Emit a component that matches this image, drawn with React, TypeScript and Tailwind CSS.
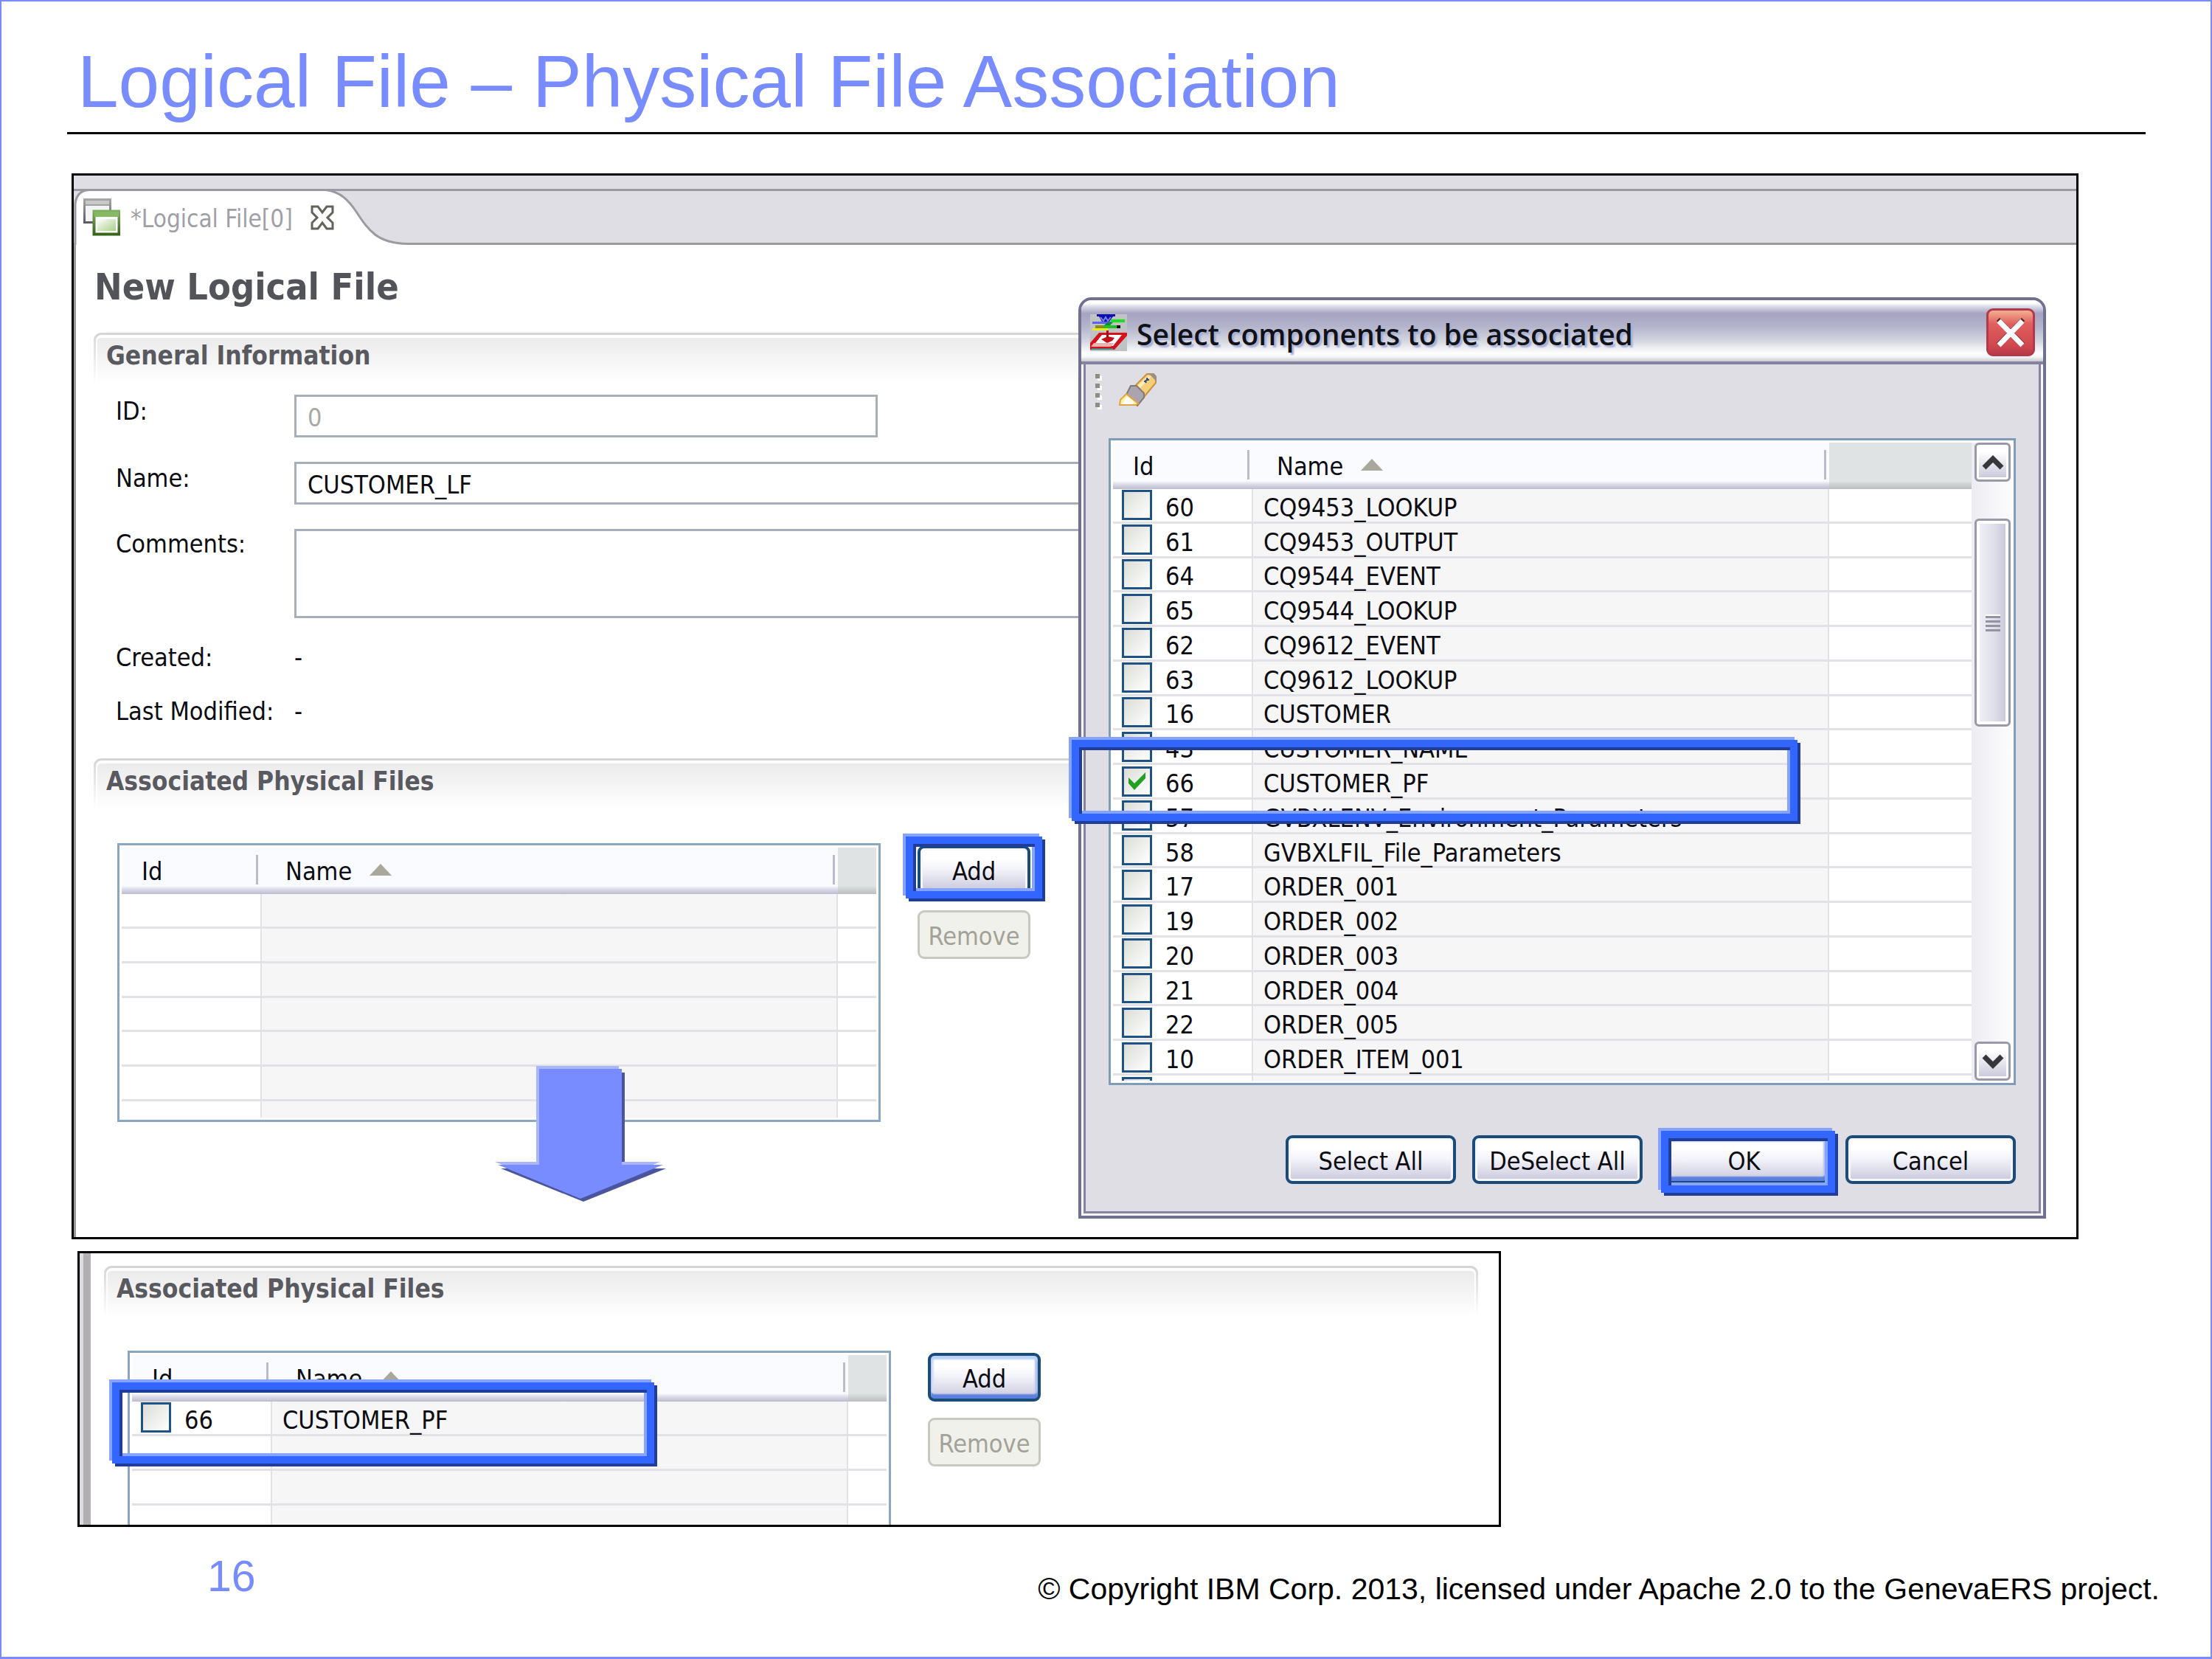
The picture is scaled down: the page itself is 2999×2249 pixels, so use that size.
import type { ReactNode } from "react";

type Row = { id: string; name: string; checked?: boolean };

const components: Row[] = [
  { id: "60", name: "CQ9453_LOOKUP" },
  { id: "61", name: "CQ9453_OUTPUT" },
  { id: "64", name: "CQ9544_EVENT" },
  { id: "65", name: "CQ9544_LOOKUP" },
  { id: "62", name: "CQ9612_EVENT" },
  { id: "63", name: "CQ9612_LOOKUP" },
  { id: "16", name: "CUSTOMER" },
  { id: "43", name: "CUSTOMER_NAME" },
  { id: "66", name: "CUSTOMER_PF", checked: true },
  { id: "57", name: "GVBXLENV_Environment_Parameters" },
  { id: "58", name: "GVBXLFIL_File_Parameters" },
  { id: "17", name: "ORDER_001" },
  { id: "19", name: "ORDER_002" },
  { id: "20", name: "ORDER_003" },
  { id: "21", name: "ORDER_004" },
  { id: "22", name: "ORDER_005" },
  { id: "10", name: "ORDER_ITEM_001" },
  { id: "", name: "" },
];

const noRows = (count: number): (Row | null)[] => Array.from({ length: count }, () => null);

/* Raised blue frame that calls out the control below it. */
function Highlight({ className }: { className: string }) {
  return (
    <span
      aria-hidden="true"
      className={`pointer-events-none absolute z-10 border-[10px] border-[#3366ff] shadow-[-4px_-4px_0_#85a3ff,4px_4px_0_#1f3d99,inset_4px_4px_0_#1f3d99,inset_-4px_-4px_0_#85a3ff] ${className}`}
    />
  );
}

function SectionHeader({ children }: { children: ReactNode }) {
  return (
    <div className="rounded-t-[10px] border-t-[3px] border-[#d4d4d4] bg-[linear-gradient(to_bottom,#d8d8d8,#ffffff)]">
      <div className="mx-[3px] rounded-t-[8px] border-x-2 border-t-4 border-white bg-[linear-gradient(to_bottom,#ebebeb,#ffffff)]">
        <h2 className="h-[62px] pl-3 text-[35px] leading-10 font-bold text-[#595960]">
          <span className="block pt-1">{children}</span>
        </h2>
      </div>
    </div>
  );
}

function TickBox({ label, checked }: { label: string; checked?: boolean }) {
  return (
    <span className="relative block size-[41px] shrink-0">
      <input
        type="checkbox"
        aria-label={label}
        defaultChecked={checked}
        className="peer block size-full appearance-none border-[3px] border-[#1f5285] bg-[linear-gradient(135deg,#dcdcd7,#ffffff)] bg-clip-border"
      />
      <svg viewBox="0 0 41 41" className="pointer-events-none absolute inset-0 hidden peer-checked:block" aria-hidden="true">
        <path d="M9 15v8l8 9L32 16V8L17 23z" fill="#21a121" />
      </svg>
    </span>
  );
}

function GridTable({ rows, tall, label }: { rows: (Row | null)[]; tall: string; label: string }) {
  return (
    <table className={`w-full table-fixed border-separate border-spacing-0 ${tall}`} aria-label={label}>
      <colgroup>
        <col className="w-[190px]" />
        <col className="w-[781px]" />
        <col />
      </colgroup>
      <thead>
        <tr className="h-[63px] text-left align-top">
          <th className="h-[63px] bg-[linear-gradient(to_bottom,#f9fbff_52px,#dedfea_56px,#bdbbd0)] p-0 pt-2.5 font-normal">
            <div className="mr-[5px] h-10 border-r-[3px] border-[#bcbace] pl-[27px] leading-[44px]">Id</div>
          </th>
          <th className="bg-[linear-gradient(to_bottom,#f9fbff_52px,#dedfea_56px,#bdbbd0)] p-0 pt-2.5 font-normal">
            <div className="mr-1 flex h-10 items-center gap-6 border-r-[3px] border-[#bcbace] pl-8 leading-[44px]">
              <span className="pt-1">Name</span>
              <svg viewBox="0 0 30 16" className="h-4 w-[30px]" aria-hidden="true">
                <path d="M15 0 30 16H0z" fill="#aaa89a" />
              </svg>
            </div>
          </th>
          <td className="bg-[linear-gradient(to_bottom,#dfe3e3_52px,#d0d4d4_56px,#bcbfbf)] p-0" />
        </tr>
      </thead>
      <tbody>
        {rows.map((row, i) => (
          <tr key={i}>
            <td className="border-r-2 border-b-[3px] border-[#e2e2e6] bg-white p-0">
              <div className="flex h-[42px] items-center gap-[18px] pl-3">
                {row && <TickBox label={`Select ${row.name || "next component"}`} checked={row.checked} />}
                {row && <span className="pt-1.5 leading-9">{row.id}</span>}
              </div>
            </td>
            <td className="border-r-2 border-b-[3px] border-[#e2e2e6] bg-[#f6f6f6] p-0">
              <div className="h-[42px] pt-1.5 pl-3.5 leading-9 whitespace-nowrap">{row?.name}</div>
            </td>
            <td className="border-b-[3px] border-[#e2e2e6] bg-white p-0" />
          </tr>
        ))}
      </tbody>
    </table>
  );
}

function XpButton({ children, className, focused }: { children: ReactNode; className: string; focused?: boolean }) {
  return (
    <button
      type="button"
      className={`h-[66px] rounded-[9px] border-4 border-[#1b4b79] bg-[linear-gradient(to_bottom,#ffffff_25%,#f2f2fa_50%,#c9c8dc)] pt-1 text-center leading-10 ${
        focused ? "shadow-[inset_0_5px_2px_#b9d2f8,inset_0_-6px_2px_#5b80e0,inset_4px_0_2px_#d5e0f8,inset_-4px_0_2px_#b5c4ee]" : "shadow-[inset_0_0_0_3px_#f6f6fc]"
      } ${className}`}
    >
      {children}
    </button>
  );
}

function AssociatedFiles({ rows, focused, highlightAdd, children }: {
  rows: (Row | null)[];
  focused?: boolean;
  highlightAdd?: boolean;
  children?: ReactNode;
}) {
  return (
    <div className="mt-[46px] ml-8 flex items-start gap-[50px]">
      <div className="relative w-[1035px]">
        <div className="h-[378px] overflow-hidden border-[3px] border-[#8aa6c0] bg-white p-[3px]">
          <div className="h-full overflow-hidden">
            <GridTable rows={rows} tall="h-[391px]" label="Associated physical files" />
          </div>
        </div>
        {children}
      </div>
      <div className="flex w-[153px] flex-col gap-[22px] pt-[3px]">
        <div className="relative">
          <XpButton className="w-full" focused={focused}>Add</XpButton>
          {highlightAdd && <Highlight className="-top-3 -right-4 -bottom-1.5 -left-4" />}
        </div>
        <button
          type="button"
          disabled
          className="h-[66px] rounded-[9px] border-[3px] border-[#c9c8c0] bg-[#f1f1ec] pt-1 leading-10 text-[#a3a298]"
        >
          Remove
        </button>
      </div>
    </div>
  );
}

function TabStrip() {
  return (
    <div className="relative h-[94px] border-b-[3px] border-[#9c9aa1] bg-[#dfdee4] pt-[18px]">
      <div className="border-t-[3px] border-[#9c9aa1]" />
      <svg viewBox="0 0 460 76" className="absolute top-[18px] left-0 h-[76px] w-[460px]" aria-hidden="true">
        <path d="M2 76V20Q4 3 20 1.500H342C362 4 373 16 383 31C400 57 412 74 452 74.500V76z" fill="#fff" />
        <path d="M2 76V20Q4 3 20 1.500H342C362 4 373 16 383 31C400 57 412 74 452 74.500" fill="none" stroke="#9c9aa1" strokeWidth="3" />
      </svg>
      <div className="relative flex items-center pt-2.5 pl-[13px]">
        <svg viewBox="0 0 50 51" className="h-[51px] w-[50px]" aria-hidden="true">
          <defs>
            <linearGradient id="pane" x1="0" y1="0" x2="1" y2="1">
              <stop offset="0" stopColor="#fff" />
              <stop offset="1" stopColor="#a9cf86" />
            </linearGradient>
            <linearGradient id="edge" x1="0" y1="0" x2="0" y2="1">
              <stop offset="0" stopColor="#7fae5e" />
              <stop offset="1" stopColor="#38651c" />
            </linearGradient>
            <linearGradient id="back" x1="0" y1="0" x2="0" y2="1">
              <stop offset="0" stopColor="#a6a6a8" />
              <stop offset="1" stopColor="#5e5e60" />
            </linearGradient>
          </defs>
          <rect x="1.500" y="1.500" width="35" height="31" fill="#f4f4f6" stroke="url(#back)" strokeWidth="3" />
          <rect x="3" y="3" width="32" height="6" fill="#c9c9ca" />
          <path d="M3 9h32" stroke="#a3a3a5" strokeWidth="2" />
          <rect x="14.500" y="17.500" width="34" height="31" fill="#fff" stroke="url(#edge)" strokeWidth="4" />
          <rect x="15" y="18" width="33" height="7" fill="#86b866" />
          <rect x="19" y="28" width="25" height="16" fill="url(#pane)" />
        </svg>
        <span className="ml-[14px] pt-1 text-[33px] leading-10 text-[#a09fa8]">*Logical File[0]</span>
        <button type="button" aria-label="Close tab" className="ml-[23px] size-[34px]">
          <svg viewBox="0 0 34 34" className="size-full" aria-hidden="true">
            <path
              d="M3 2h8l6 8 6-8h8v8l-7 7 7 7v8h-8l-6-8-6 8H3v-8l7-7-7-7z"
              fill="#fff"
              stroke="#62625a"
              strokeWidth="3"
            />
          </svg>
        </button>
      </div>
    </div>
  );
}

const field = "block border-[3px] border-[#a9afb8] bg-white pl-[15px]";

function LogicalFileEditor() {
  return (
    <section className="relative mr-[179px] ml-[95px] border-[3px] border-black bg-white">
      <TabStrip />
      <div className="border-l-[3px] border-[#9c9aa1] pb-[156px]">
        <h1 className="pt-[27px] pl-[25px] text-[50px] leading-[60px] font-bold text-[#53545a]">New Logical File</h1>
        <div className="mr-[80px] ml-6 pt-[32px]">
          <SectionHeader>General Information</SectionHeader>
          <form className="mt-[15px] ml-[30px] grid grid-cols-[242px_1fr] gap-y-[33px] leading-10" onSubmit={(e) => e.preventDefault()}>
            <label htmlFor="lf-id" className="pt-0.5">ID:</label>
            <input id="lf-id" readOnly defaultValue="0" className={`${field} h-[58px] w-[791px] pt-1 text-[#a9a9a4]`} />
            <label htmlFor="lf-name" className="pt-0.5">Name:</label>
            <input id="lf-name" defaultValue="CUSTOMER_LF" className={`${field} h-[58px] w-full pt-1`} />
            <label htmlFor="lf-comments">Comments:</label>
            <textarea id="lf-comments" className={`${field} h-[121px] w-full resize-none`} />
            <span>Created:</span>
            <span>-</span>
            <span>Last Modified:</span>
            <span>-</span>
          </form>
          <div className="mt-[44px]">
            <SectionHeader>Associated Physical Files</SectionHeader>
            <AssociatedFiles rows={noRows(7)} highlightAdd>
              <svg viewBox="0 0 232 184" className="absolute top-[302px] left-[512px] h-[184px] w-[232px]" aria-hidden="true">
                <path d="M64 9h112v130h56L120 184 8 139h56z" fill="#4a559e" />
                <path d="M56 0h112v130h56L112 175 0 130h56z" fill="#a9b5ff" />
                <path d="M60 4h112v130h56L116 180 4 134h56z" fill="#788bff" />
              </svg>
            </AssociatedFiles>
          </div>
        </div>
      </div>
      <SelectDialog />
    </section>
  );
}

function ScrollBar() {
  const cap = "grid h-[53px] w-full place-items-center rounded-[6px] border-[3px] border-[#9a99a8] bg-[linear-gradient(to_bottom,#ffffff_20%,#c6c6da)] shadow-[inset_0_0_0_3px_#fff]";
  return (
    <div className="flex w-[54px] shrink-0 flex-col bg-[linear-gradient(to_right,#ececf2,#fdfdff)] pr-px pl-1">
      <button type="button" aria-label="Scroll up" className={cap}>
        <svg viewBox="0 0 30 20" className="h-5 w-[30px]" aria-hidden="true">
          <path d="M3 17 15 5l12 12" fill="none" stroke="#38383a" strokeWidth="7" />
        </svg>
      </button>
      <div className="mt-[50px] grid h-[282px] place-items-center rounded-[6px] border-[3px] border-[#9a99a8] bg-[linear-gradient(to_right,#f1f1f5,#dfdfea_55%,#c3c3d6)] shadow-[inset_0_0_0_4px_#fff]">
        <div className="flex flex-col gap-[3px] border-t-2 border-white">
          <span className="h-[3px] w-5 bg-[#9393a4]" />
          <span className="h-[3px] w-5 bg-[#9393a4]" />
          <span className="h-[3px] w-5 bg-[#9393a4]" />
          <span className="h-[3px] w-5 bg-[#9393a4]" />
        </div>
      </div>
      <button type="button" aria-label="Scroll down" className={`${cap} mt-auto`}>
        <svg viewBox="0 0 30 20" className="h-5 w-[30px]" aria-hidden="true">
          <path d="M3 3l12 12L27 3" fill="none" stroke="#38383a" strokeWidth="7" />
        </svg>
      </button>
    </div>
  );
}

function AppIcon() {
  return (
    <svg viewBox="0 0 50 50" className="size-[50px] shrink-0" aria-hidden="true">
      <rect width="50" height="50" fill="#bfc3c6" />
      <path d="M9 0h25v3h-3l-5 7H16l-4-7H9z" fill="#0a10a8" />
      <path d="M14 4l4 5 3-5 3 5 4-5" fill="none" stroke="#7d80f4" strokeWidth="2" />
      <path d="M3 10h26v3H3z" fill="#5f61f2" />
      <path d="M28 7h19v4H28z" fill="#1be01b" />
      <path d="M23 11h8l-5 5h-8z" fill="#178a3a" />
      <path d="M7 15h11v5H7z" fill="#8f8a10" />
      <path d="M18 15h18v4H18z" fill="#1dc41d" />
      <path d="M36 15h5v4h-5z" fill="#101010" />
      <path d="M3 19h21v3H3z" fill="#ecec1c" />
      <path d="M12 25h38v4L33 48H0v-9z" fill="#d5121a" />
      <path d="M16 28h27L31 43H4z" fill="#fff" />
      <path d="M5 39h27l-4 5H1z" fill="#efb0b2" />
      <path d="M15 34l9-4 9 2-3 4-7 3z" fill="#c41016" />
      <path d="M22 22h3v10h-3z" fill="#a81018" />
      <path d="M2 46h29v2H2z" fill="#4f7f7c" />
    </svg>
  );
}

function SelectDialog() {
  return (
    <div
      role="dialog"
      aria-label="Select components to be associated"
      className="absolute top-[165px] left-[1362px] w-[1312px] rounded-t-[18px] border-4 border-[#72708f] bg-[#f8f8fc] pb-[3px]"
    >
      <div className="flex h-[87px] items-center rounded-t-[14px] border-b-4 border-[#85839f] bg-[linear-gradient(to_bottom,#ffffff_4px,#d9d8e6_9px,#a6a3c2_18px,#b4b4cc_36px,#d6d8e1_56px,#ffffff_72px,#f4f4f6_77px,#c8c7d0_83px)] pt-1 pr-[11px] pl-3">
        <AppIcon />
        <h2 className="ml-[13px] pt-1 font-['Open_Sans','Noto_Sans',sans-serif] text-[39px] leading-[52px] font-semibold text-[#111118] [text-shadow:3px_3px_2px_#a7b0d2]">
          Select components to be associated
        </h2>
        <button
          type="button"
          aria-label="Close"
          className="ml-auto grid h-[65px] w-[66px] place-items-center rounded-[9px] border-[3px] border-[#b03a4c] bg-[linear-gradient(to_bottom,#f2b090,#e0605f_30%,#d0484f_80%,#b83a4a)]"
        >
          <svg viewBox="0 0 42 40" className="h-10 w-[42px]" aria-hidden="true">
            <path d="M4 2 38 36M38 2 4 36" stroke="#5a1f26" strokeWidth="6" />
            <path d="M5 4 37 37M37 4 5 37" stroke="#fff" strokeWidth="7" />
          </svg>
        </button>
      </div>
      <div className="mx-[3px] border-x-[3px] border-b-[3px] border-[#85839f] bg-[#dfdee4] px-[31px] pb-[37px]">
        <div className="-ml-[18px] flex h-[100px] items-start gap-6 pt-[11px]">
          <div className="flex flex-col gap-[7px] pt-0.5" aria-hidden="true">
            <span className="size-1.5 bg-[#8e8d84] shadow-[3px_3px_0_#fff]" />
            <span className="size-1.5 bg-[#8e8d84] shadow-[3px_3px_0_#fff]" />
            <span className="size-1.5 bg-[#8e8d84] shadow-[3px_3px_0_#fff]" />
            <span className="size-1.5 bg-[#8e8d84] shadow-[3px_3px_0_#fff]" />
          </div>
          <button type="button" aria-label="Find" className="h-[46px] w-[54px]">
            <svg viewBox="0 0 54 46" className="size-full" aria-hidden="true">
              <path d="M40 2h9l3 4v8L37 32 24 18z" fill="#f6cf7c" stroke="#d08f38" strokeWidth="2" />
              <path d="M41 5h5L31 21l-4-3z" fill="#fdeab4" />
              <path d="M18 18h8l10 10v6l-9 11-15-15z" fill="#a9a4ae" stroke="#847a70" strokeWidth="2" />
              <path d="M12 29 4 37l-1 7h22l3-2z" fill="#fdf0a8" stroke="#e0a545" strokeWidth="2" />
              <path d="M13 32 6 43h15l2-3z" fill="#fffef0" />
              <path d="M40 7l3 3-4 1zM36 12l3-2v4z" fill="#2a4f7c" stroke="#2a4f7c" />
              <path d="M42 1h7l4 4v8l-4-5z" fill="#9c8f84" />
            </svg>
          </button>
        </div>
        <div className="relative">
          <div className="flex h-[877px] border-[3px] border-[#7f9db9] bg-white p-[3px]">
            <div className="h-full flex-1 overflow-hidden">
              <GridTable rows={components} tall="h-[905px]" label="Components" />
            </div>
            <ScrollBar />
          </div>
          <Highlight className="top-[409px] right-[296px] -left-[50px] h-[110px]" />
        </div>
        <div className="mt-[68px] flex justify-end gap-[22px]">
          <XpButton className="w-[231px]">Select All</XpButton>
          <XpButton className="w-[231px]">DeSelect All</XpButton>
          <div className="relative">
            <XpButton className="w-[231px]" focused>OK</XpButton>
            <Highlight className="-top-1.5 -right-2 -bottom-3 left-[3px]" />
          </div>
          <XpButton className="w-[231px]">Cancel</XpButton>
        </div>
      </div>
    </div>
  );
}

function ResultPanel() {
  return (
    <section className="mt-4 ml-[103px] h-[374px] w-[1930px] max-w-full border-[3px] border-black bg-white">
      <div className="h-full overflow-hidden border-l-[5px] border-[#dcdbe0]">
        <div className="h-full border-l-[10px] border-[#b3b0b4] pt-[17px] pr-7 pl-[18px]">
          <SectionHeader>Associated Physical Files</SectionHeader>
          <AssociatedFiles rows={[{ id: "66", name: "CUSTOMER_PF" }, ...noRows(6)]} focused>
            <Highlight className="top-[43px] -left-[21px] h-[110px] w-[735px]" />
          </AssociatedFiles>
        </div>
      </div>
    </section>
  );
}

export default function App() {
  return (
    <main className="flex min-h-screen flex-col border-2 border-b-[3px] border-[#788bff] bg-white font-['DejaVu_Sans_Condensed','DejaVu_Sans',sans-serif] text-[34px] text-[#0c0c12]">
      <header className="mr-[88px] ml-[89px] border-b-[3px] border-black pt-[52px] pb-[13px] pl-[14px] font-['Liberation_Sans',Arial,sans-serif] text-[100px] leading-[112px] text-[#788bff]">
        Logical File – Physical File Association
      </header>
      <div className="pt-[53px]">
        <LogicalFileEditor />
        <ResultPanel />
      </div>
      <footer className="flex items-start justify-between pr-[69px] pl-[279px] font-['Liberation_Sans',Arial,sans-serif]">
        <span className="pt-[33px] text-[59px] leading-[68px] text-[#788bff]">16</span>
        <span className="pt-[60px] text-[41px] leading-[48px] text-black">
          © Copyright IBM Corp. 2013, licensed under Apache 2.0 to the GenevaERS project.
        </span>
      </footer>
    </main>
  );
}
